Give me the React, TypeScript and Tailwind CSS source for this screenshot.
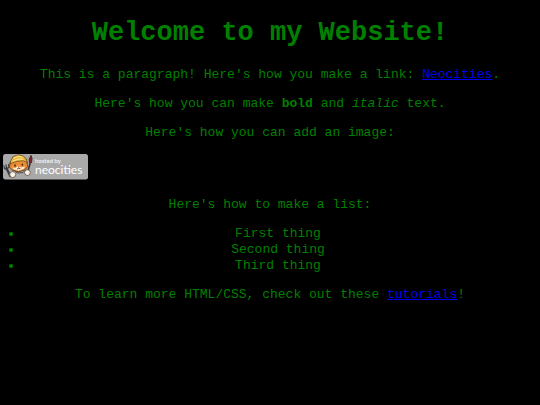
import type { ReactNode } from "react";

function Paragraph({ children }: { children: ReactNode }) {
  return <p className="mb-[13px]">{children}</p>;
}

function TextLink({ href, children }: { href: string; children: ReactNode }) {
  return (
    <a href={href} className="text-[#0000ee] underline">
      {children}
    </a>
  );
}

function NeocitiesBadge() {
  return (
    <svg
      width="85"
      height="26"
      viewBox="0 0 85 26"
      role="img"
      aria-label="Hosted by Neocities"
      className="block"
    >
      <rect x="0" y="0" width="85" height="25.5" rx="2.5" fill="#a9a9a9" />
      {/* fork */}
      <g stroke="#3c3c3e" fill="none" strokeLinecap="round">
        <path d="M3.4 14 7.2 22" strokeWidth="2.2" />
        <path d="M.9 11.5 1.4 14.5 3.6 15.5 6 13 5.4 10.5M3 10.8 3.6 14" strokeWidth="1.1" />
      </g>
      {/* paint brush */}
      <path d="M27.2 9.5 25 16.5" stroke="#3f2824" strokeWidth="1.5" />
      <path d="M28 1.4 29.1 4.5 28.4 8.8 26.6 9.3 26.2 5.2Z" fill="#8a2530" stroke="#30201d" strokeWidth=".8" />
      {/* body and paws */}
      <path d="M11.5 16 14 19 20 18.6 22.5 16" fill="none" stroke="#59483e" strokeWidth="1" />
      <circle cx="9.7" cy="20.6" r="3" fill="#fbf2e6" stroke="#594b43" strokeWidth=".8" />
      <circle cx="24.4" cy="18.6" r="2.9" fill="#fbf2e6" stroke="#594b43" strokeWidth=".8" />
      {/* head */}
      <path d="M7 8.2 6.6 13.4 9.5 16.2 15.5 17.8 21.5 16 24.8 12.5 23.2 5 16 4Z" fill="#ef8d32" stroke="#59391d" strokeWidth=".9" />
      <path d="M9.2 13.6 12.5 14 15.5 11.6 18 13.4 22 12.4 20.8 15 15.5 16.8 11 15.6Z" fill="#ffe9cf" />
      <path d="M12 10.6v1.8M19.4 9.8v1.8" stroke="#261c17" strokeWidth="1.4" />
      <path d="M15 12.9h1.4M14 15 15.8 14.2 17.4 14.8" stroke="#70412b" strokeWidth=".9" fill="none" />
      {/* cap */}
      <path d="M7.8 6.8 10 2.6 14.6 .8 19.8 1.5 23 5 24.5 8.6 20.3 6.8 14 7.4 7.2 9.8Z" fill="#e7b741" stroke="#6b501f" strokeWidth=".8" />
      <path d="M11 4.2 15 2.5 19.2 3.2M9.8 7 15 5.2 20.6 5.2" stroke="#ffe38a" strokeWidth="1" fill="none" />
      <g fill="#ffffff" className="font-['Lato',sans-serif]">
        <text x="32" y="9" fontSize="6">hosted by</text>
        <text x="32" y="20" fontSize="12">
          neocities
        </text>
      </g>
    </svg>
  );
}

export default function App() {
  return (
    <main className="min-h-screen bg-black px-[3px] pt-[18px] text-center font-['Liberation_Mono',monospace] text-[13px] leading-4 text-[#008000]">
      <h1 className="mb-[18px] text-[27px] leading-[31px] font-bold">Welcome to my Website!</h1>
      <Paragraph>
        This is a paragraph! Here's how you make a link:{" "}
        <TextLink href="https://neocities.org">Neocities</TextLink>.
      </Paragraph>
      <Paragraph>
        Here's how you can make <strong>bold</strong> and <em>italic</em> text.
      </Paragraph>
      <Paragraph>Here's how you can add an image:</Paragraph>
      <div className="mb-[17px]">
        <NeocitiesBadge />
      </div>
      <Paragraph>Here's how to make a list:</Paragraph>
      <ul className="mb-[13px] list-disc pr-1 pl-5">
        <li>First thing</li>
        <li>Second thing</li>
        <li>Third thing</li>
      </ul>
      <Paragraph>
        To learn more HTML/CSS, check out these{" "}
        <TextLink href="https://neocities.org/tutorials">tutorials</TextLink>!
      </Paragraph>
    </main>
  );
}
